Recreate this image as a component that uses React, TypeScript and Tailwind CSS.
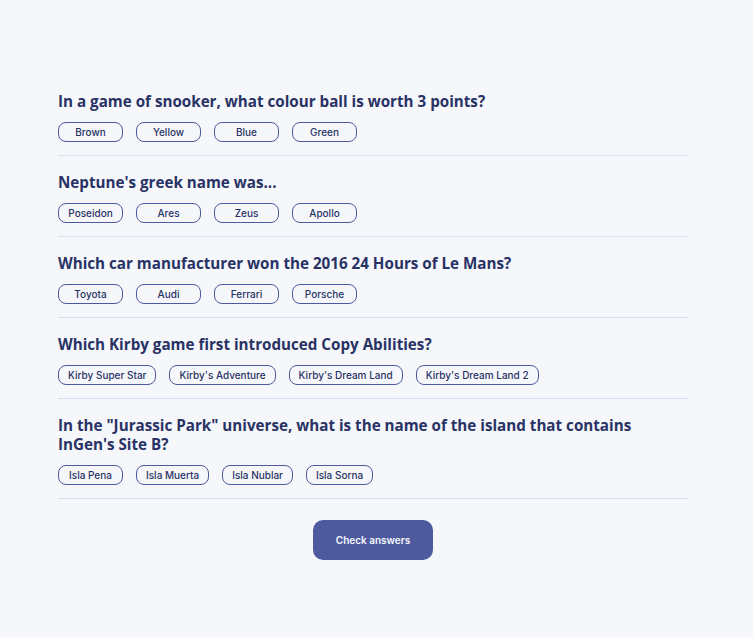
import React from "react";

const questions = [
  {
    q: "In a game of snooker, what colour ball is worth 3 points?",
    answers: ["Brown", "Yellow", "Blue", "Green"],
  },
  { q: "Neptune's greek name was...", answers: ["Poseidon", "Ares", "Zeus", "Apollo"] },
  {
    q: "Which car manufacturer won the 2016 24 Hours of Le Mans?",
    answers: ["Toyota", "Audi", "Ferrari", "Porsche"],
  },
  {
    q: "Which Kirby game first introduced Copy Abilities?",
    answers: ["Kirby Super Star", "Kirby's Adventure", "Kirby's Dream Land", "Kirby's Dream Land 2"],
  },
  {
    q: 'In the "Jurassic Park" universe, what is the name of the island that contains InGen\'s Site B?',
    answers: ["Isla Pena", "Isla Muerta", "Isla Nublar", "Isla Sorna"],
  },
];

export default function App() {
  return (
    <div className="min-h-screen bg-[#f5f7fb] pt-[92px] pb-10">
      <div className="ml-[58px] w-[630px]">
        {questions.map((item) => (
          <div key={item.q} className="border-b border-[#dbdef0] pb-[13px] mb-[17px] last:mb-0">
            <h2 className="font-['Open_Sans',sans-serif] font-bold text-[15.2px] leading-[19px] text-[#293264] pr-10">
              {item.q}
            </h2>
            <div className="flex gap-[13px] mt-[11px]">
              {item.answers.map((a) => (
                <button
                  key={a}
                  className="h-[20px] min-w-[65px] px-[9px] rounded-[8px] border border-[#4d5b9e] font-['Inter',sans-serif] font-medium text-[10px] text-[#293264] flex items-center justify-center"
                >
                  {a}
                </button>
              ))}
            </div>
          </div>
        ))}
        <div className="flex justify-center mt-[21px]">
          <button className="w-[120px] h-[40px] rounded-[10px] bg-[#4d5b9e] text-[#f5f7fb] font-['Inter',sans-serif] font-semibold text-[10px]">
            Check answers
          </button>
        </div>
      </div>
    </div>
  );
}
